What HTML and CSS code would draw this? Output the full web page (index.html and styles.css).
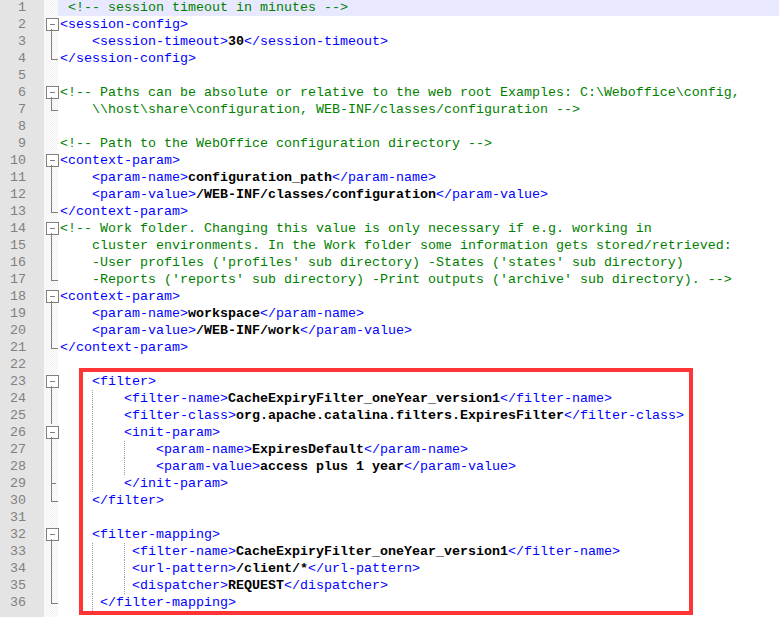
FILE: index.html
```html
<!DOCTYPE html>
<html lang="en">
<head>
  <meta charset="UTF-8">
  <title>web.xml</title>
  <link rel="stylesheet" href="styles.css">
</head>
<body>
  <div class="editor">
    <!-- Line numbers -->
    <div class="gutter">
      <div>1</div><div>2</div><div>3</div><div>4</div><div>5</div><div>6</div>
      <div>7</div><div>8</div><div>9</div><div>10</div><div>11</div><div>12</div>
      <div>13</div><div>14</div><div>15</div><div>16</div><div>17</div><div>18</div>
      <div>19</div><div>20</div><div>21</div><div>22</div><div>23</div><div>24</div>
      <div>25</div><div>26</div><div>27</div><div>28</div><div>29</div><div>30</div>
      <div>31</div><div>32</div><div>33</div><div>34</div><div>35</div><div>36</div>
    </div>

    <!-- Fold margin -->
    <div class="folds">
      <div></div>
      <div class="open"></div><div class="mid"></div><div class="end"></div>
      <div></div>
      <div class="open"></div><div class="end"></div>
      <div></div><div></div>
      <div class="open"></div><div class="mid"></div><div class="mid"></div><div class="end"></div>
      <div class="open"></div><div class="mid"></div><div class="mid"></div><div class="end"></div>
      <div class="open"></div><div class="mid"></div><div class="mid"></div><div class="end"></div>
      <div></div>
      <div class="open"></div><div class="mid"></div><div class="mid"></div>
      <div class="open inner"></div><div class="mid"></div><div class="mid"></div><div class="tee"></div>
      <div class="end"></div>
      <div></div>
      <div class="open"></div><div class="mid"></div><div class="mid"></div><div class="mid"></div><div class="end"></div>
    </div>

    <!-- Code -->
    <div class="code">
<div class="line current"><span class="c"> &lt;!-- session timeout in minutes --&gt;</span></div>
<div class="line"><span class="t">&lt;session-config&gt;</span></div>
<div class="line">    <span class="t">&lt;session-timeout&gt;</span>30<span class="t">&lt;/session-timeout&gt;</span></div>
<div class="line"><span class="t">&lt;/session-config&gt;</span></div>
<div class="line"></div>
<div class="line"><span class="c">&lt;!-- Paths can be absolute or relative to the web root Examples: C:\Weboffice\config,</span></div>
<div class="line"><span class="c">    \\host\share\configuration, WEB-INF/classes/configuration --&gt;</span></div>
<div class="line"></div>
<div class="line"><span class="c">&lt;!-- Path to the WebOffice configuration directory --&gt;</span></div>
<div class="line"><span class="t">&lt;context-param&gt;</span></div>
<div class="line">    <span class="t">&lt;param-name&gt;</span>configuration_path<span class="t">&lt;/param-name&gt;</span></div>
<div class="line">    <span class="t">&lt;param-value&gt;</span>/WEB-INF/classes/configuration<span class="t">&lt;/param-value&gt;</span></div>
<div class="line"><span class="t">&lt;/context-param&gt;</span></div>
<div class="line"><span class="c">&lt;!-- Work folder. Changing this value is only necessary if e.g. working in</span></div>
<div class="line"><span class="c">    cluster environments. In the Work folder some information gets stored/retrieved:</span></div>
<div class="line"><span class="c">    -User profiles ('profiles' sub directory) -States ('states' sub directory)</span></div>
<div class="line"><span class="c">    -Reports ('reports' sub directory) -Print outputs ('archive' sub directory). --&gt;</span></div>
<div class="line"><span class="t">&lt;context-param&gt;</span></div>
<div class="line">    <span class="t">&lt;param-name&gt;</span>workspace<span class="t">&lt;/param-name&gt;</span></div>
<div class="line">    <span class="t">&lt;param-value&gt;</span>/WEB-INF/work<span class="t">&lt;/param-value&gt;</span></div>
<div class="line"><span class="t">&lt;/context-param&gt;</span></div>
<div class="line"></div>
<div class="line">    <span class="t">&lt;filter&gt;</span></div>
<div class="line">    <span class="g">    </span><span class="t">&lt;filter-name&gt;</span>CacheExpiryFilter_oneYear_version1<span class="t">&lt;/filter-name&gt;</span></div>
<div class="line">    <span class="g">    </span><span class="t">&lt;filter-class&gt;</span>org.apache.catalina.filters.ExpiresFilter<span class="t">&lt;/filter-class&gt;</span></div>
<div class="line">    <span class="g">    </span><span class="t">&lt;init-param&gt;</span></div>
<div class="line">    <span class="g">    </span><span class="g">    </span><span class="t">&lt;param-name&gt;</span>ExpiresDefault<span class="t">&lt;/param-name&gt;</span></div>
<div class="line">    <span class="g">    </span><span class="g">    </span><span class="t">&lt;param-value&gt;</span>access plus 1 year<span class="t">&lt;/param-value&gt;</span></div>
<div class="line">    <span class="g">    </span><span class="t">&lt;/init-param&gt;</span></div>
<div class="line">    <span class="t">&lt;/filter&gt;</span></div>
<div class="line"></div>
<div class="line">    <span class="t">&lt;filter-mapping&gt;</span></div>
<div class="line">    <span class="g">    </span><span class="g"> </span><span class="t">&lt;filter-name&gt;</span>CacheExpiryFilter_oneYear_version1<span class="t">&lt;/filter-name&gt;</span></div>
<div class="line">    <span class="g">    </span><span class="g"> </span><span class="t">&lt;url-pattern&gt;</span>/client/*<span class="t">&lt;/url-pattern&gt;</span></div>
<div class="line">    <span class="g">    </span><span class="g"> </span><span class="t">&lt;dispatcher&gt;</span>REQUEST<span class="t">&lt;/dispatcher&gt;</span></div>
<div class="line">    <span class="g"> </span><span class="t">&lt;/filter-mapping&gt;</span></div>
    </div>

    <!-- Highlight box drawn over the filter block -->
    <div class="mark"></div>
  </div>
</body>
</html>
```

FILE: styles.css
```css
/* General Reset */
* {
  margin: 0;
  padding: 0;
  box-sizing: border-box;
}

body {
  background: #fff;
  font-family: 'Liberation Mono', 'Courier New', monospace;
  font-size: 13.333px;
  overflow: hidden;
}

/* Editor */
.editor {
  position: relative;
  display: flex;
  height: 100vh;
  margin-top: -1px;
}

/* Line numbers */
.gutter {
  width: 44px;
  flex-shrink: 0;
  background: #e4e4e4;
  color: #808080;
  text-align: right;
  padding-right: 18px;
}

.gutter div {
  height: 17px;
  line-height: 17px;
}

/* Fold margin */
.folds {
  width: 14px;
  flex-shrink: 0;
  background: repeating-conic-gradient(#f1f1f1 0 25%, #fff 0 50%) 0 0 / 2px 2px;
}

.folds div {
  position: relative;
  height: 17px;
}

.open::before {
  content: "";
  position: absolute;
  left: 2px;
  top: 2px;
  width: 11px;
  height: 11px;
  border: 1px solid #808080;
  background: #fff linear-gradient(#808080, #808080) center / 5px 1px no-repeat;
}

.open::after {
  content: "";
  position: absolute;
  left: 7px;
  top: 13px;
  width: 1px;
  height: 4px;
  background: #808080;
}

.mid::before,
.tee::before {
  content: "";
  position: absolute;
  left: 7px;
  top: 0;
  width: 1px;
  height: 17px;
  background: #808080;
}

.tee::after {
  content: "";
  position: absolute;
  left: 7px;
  top: 8px;
  width: 5px;
  height: 1px;
  background: #808080;
}

.end::before {
  content: "";
  position: absolute;
  left: 7px;
  top: 0;
  width: 6px;
  height: 9px;
  border-left: 1px solid #808080;
  border-bottom: 1px solid #808080;
}

/* Code */
.code {
  flex: 1;
  min-width: 0;
}

.line {
  height: 17px;
  line-height: 17px;
  padding-left: 2px;
  white-space: pre;
  color: #000;
  font-weight: bold;
}

.line.current {
  background: #e8e8ff;
}

.t {
  color: #0000ff;
  font-weight: normal;
}

.c {
  color: #008000;
  font-weight: normal;
}

/* Indent guides */
.g {
  display: inline-block;
  height: 17px;
  vertical-align: top;
  background: repeating-linear-gradient(to bottom, #a0a0a0 0 1px, transparent 1px 2px) 0 0 / 1px 100% no-repeat;
}

/* Red box */
.mark {
  position: absolute;
  left: 79px;
  top: 369px;
  width: 614px;
  height: 247px;
  border: 4px solid #ff3535;
}
```
